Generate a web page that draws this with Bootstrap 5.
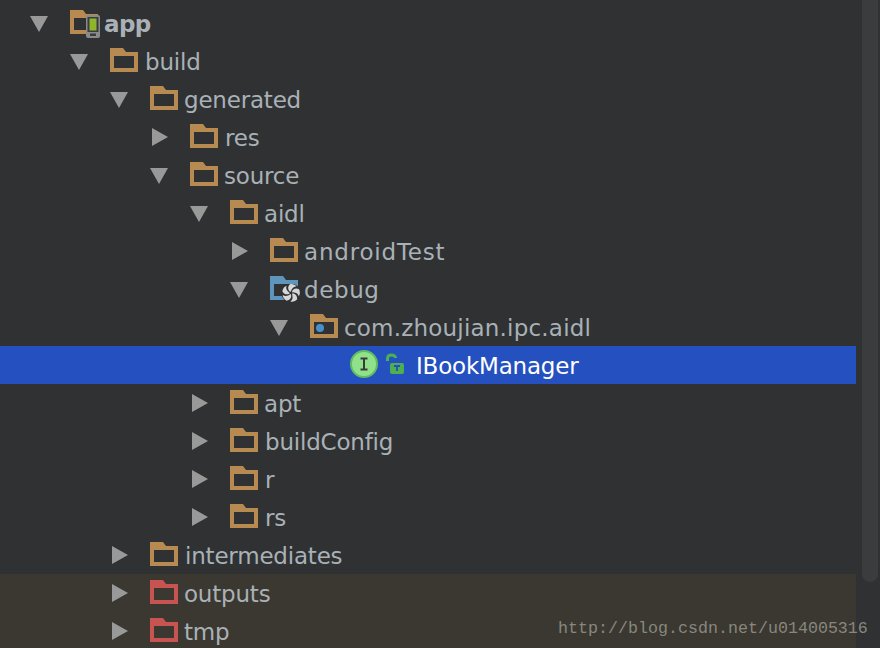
<!DOCTYPE html>
<html lang="en">
<head>
  <meta charset="UTF-8">
  <title>Project Tree</title>
  <link href="https://cdn.jsdelivr.net/npm/bootstrap@5.3.3/dist/css/bootstrap.min.css" rel="stylesheet">
  <style>
    html, body { height: 648px; overflow: hidden; }
    body { background: #2f3133; }
    .ide-pane { height: 648px; }
    .file-tree { width: 856px; padding-top: 4px; font-family: "DejaVu Sans", sans-serif; font-size: 23px; color: #a9b1b7; }
    .tree-row { height: 38px; white-space: nowrap; }
    .depth-0 { padding-left: 30px; }
    .depth-1 { padding-left: 70px; }
    .depth-2 { padding-left: 110px; }
    .depth-3 { padding-left: 150px; }
    .depth-4 { padding-left: 190px; }
    .depth-5 { padding-left: 230px; }
    .depth-6 { padding-left: 270px; }
    .depth-7 { padding-left: 310px; }
    .depth-8 { padding-left: 350px; }
    .arrow-slot { width: 18px; margin-right: 22px; flex: none; }
    .arrow-slot svg, .folder-slot svg { display: block; }
    .arrow-slot svg:not(.ms-auto) { margin-top: 2px; }
    .folder-slot { width: 34px; height: 24px; flex: none; position: relative; margin-bottom: 2px; }
    .node-label { line-height: 38px; margin-top: 2px; letter-spacing: -.2px; }
    .spread-lg { letter-spacing: .8px; }
    .spread-md { letter-spacing: .6px; }
    .spread-sm { letter-spacing: .2px; }
    .squeeze { letter-spacing: -.6px; }
    .nudge { margin-left: 1px; }
    .tree-row.selected { background: #2450c0; color: #fff; }
    .tree-row.excluded { background: #3b3831; }
    .ic-brown { color: #b68a50; }
    .ic-red { color: #c75450; }
    .ic-blue { color: #5f95bd; }
    .badge-over { position: absolute; }
    .scroll-gutter { width: 24px; padding: 0 2px 0 6px; }
    .scroll-thumb { height: 582px; background: #3a3c3e; border-radius: 0 0 8px 8px; }
    .class-slot { width: 66px; height: 38px; flex: none; }
    .watermark { position: absolute; left: 558px; top: 618px; font-family: "Liberation Mono", monospace; font-size: 16.67px; line-height: 22px; color: #87877e; white-space: nowrap; }
  </style>
</head>
<body>
<svg width="0" height="0" class="position-absolute">
  <symbol id="down" viewBox="0 0 18 16"><path d="M0 0H18L9 16Z" fill="#999"/></symbol>
  <symbol id="right" viewBox="0 0 16 18"><path d="M0 0L16 9L0 18Z" fill="#999"/></symbol>
  <symbol id="folder" viewBox="0 0 28 24"><path fill-rule="evenodd" fill="currentColor" d="M0 0H13L16 4H28V24H0ZM4 8V20H24V8Z"/></symbol>
</svg>

<div class="ide-pane d-flex position-relative">
  <div class="file-tree">
    <!-- app -->
    <div class="tree-row depth-0 d-flex align-items-center">
      <span class="arrow-slot"><svg width="18" height="16"><use href="#down"/></svg></span>
      <span class="folder-slot ic-brown">
        <svg width="28" height="24"><use href="#folder"/></svg>
        <svg class="badge-over" style="left:16px;top:5px" width="14" height="23" viewBox="0 0 14 23">
          <rect x="0" y="0" width="14" height="23" rx="2" fill="#8a8a8a"/>
          <rect x="1.5" y="2" width="11" height="15" fill="#3a3c3e"/>
          <rect x="3.5" y="3.5" width="7" height="12" fill="#8fb52a"/>
          <rect x="4" y="18.5" width="6" height="2.5" fill="#3a3c3e"/>
        </svg>
      </span>
      <span class="node-label fw-bold squeeze">app</span>
    </div>
    <div class="tree-row depth-1 d-flex align-items-center">
      <span class="arrow-slot"><svg width="18" height="16"><use href="#down"/></svg></span>
      <span class="folder-slot ic-brown"><svg width="28" height="24"><use href="#folder"/></svg></span>
      <span class="node-label nudge">build</span>
    </div>
    <div class="tree-row depth-2 d-flex align-items-center">
      <span class="arrow-slot"><svg width="18" height="16"><use href="#down"/></svg></span>
      <span class="folder-slot ic-brown"><svg width="28" height="24"><use href="#folder"/></svg></span>
      <span class="node-label">generated</span>
    </div>
    <div class="tree-row depth-3 d-flex align-items-center">
      <span class="arrow-slot"><svg width="16" height="18" class="ms-auto"><use href="#right"/></svg></span>
      <span class="folder-slot ic-brown"><svg width="28" height="24"><use href="#folder"/></svg></span>
      <span class="node-label nudge">res</span>
    </div>
    <div class="tree-row depth-3 d-flex align-items-center">
      <span class="arrow-slot"><svg width="18" height="16"><use href="#down"/></svg></span>
      <span class="folder-slot ic-brown"><svg width="28" height="24"><use href="#folder"/></svg></span>
      <span class="node-label">source</span>
    </div>
    <div class="tree-row depth-4 d-flex align-items-center">
      <span class="arrow-slot"><svg width="18" height="16"><use href="#down"/></svg></span>
      <span class="folder-slot ic-brown"><svg width="28" height="24"><use href="#folder"/></svg></span>
      <span class="node-label">aidl</span>
    </div>
    <div class="tree-row depth-5 d-flex align-items-center">
      <span class="arrow-slot"><svg width="16" height="18" class="ms-auto"><use href="#right"/></svg></span>
      <span class="folder-slot ic-brown"><svg width="28" height="24"><use href="#folder"/></svg></span>
      <span class="node-label spread-lg">androidTest</span>
    </div>
    <!-- debug, generated sources root -->
    <div class="tree-row depth-5 d-flex align-items-center">
      <span class="arrow-slot"><svg width="18" height="16"><use href="#down"/></svg></span>
      <span class="folder-slot ic-blue">
        <svg class="d-block" width="28" height="24"><use href="#folder"/></svg>
        <svg class="badge-over" style="left:11px;top:8px" width="20" height="18" viewBox="-10 -9 20 18">
          <circle r="9.500" fill="#2f3133"/>
          <g fill="#d6d6d6">
            <path id="blade" d="M-.5 -1C-3.500 -3 -3.500 -6.500 -1 -8.800C2 -9.200 4.500 -8 5.500 -6.500C2 -6.500 .8 -4 -.5 -1Z"/>
            <use href="#blade" transform="rotate(72)"/>
            <use href="#blade" transform="rotate(144)"/>
            <use href="#blade" transform="rotate(216)"/>
            <use href="#blade" transform="rotate(288)"/>
          </g>
        </svg>
      </span>
      <span class="node-label spread-md">debug</span>
    </div>
    <div class="tree-row depth-6 d-flex align-items-center">
      <span class="arrow-slot"><svg width="18" height="16"><use href="#down"/></svg></span>
      <span class="folder-slot ic-brown">
        <svg width="28" height="24"><use href="#folder"/><circle cx="10" cy="14" r="4" fill="#4a90c8"/></svg>
      </span>
      <span class="node-label spread-sm">com.zhoujian.ipc.aidl</span>
    </div>
    <div class="tree-row selected depth-8 d-flex align-items-center">
      <span class="class-slot">
        <svg width="66" height="38" viewBox="0 0 66 38">
          <circle cx="14" cy="18" r="13" fill="#90e28a" stroke="#63bb5f" stroke-width="2"/>
          <path d="M10.5 12.500H17.500M14 12.500V23.500M10.500 23.500H17.500" stroke="#3b3b3b" stroke-width="2" fill="none"/>
          <path d="M37.500 15V12.500C37.500 7.500 45.500 8 45.500 12" stroke="#4caf50" stroke-width="3" fill="none"/>
          <rect x="40" y="17" width="14" height="11" rx="2" fill="#4caf50"/>
          <path d="M44 20H50M47 20V25" stroke="#2450c0" stroke-width="1.800"/>
        </svg>
      </span>
      <span class="node-label">IBookManager</span>
    </div>
    <div class="tree-row depth-4 d-flex align-items-center">
      <span class="arrow-slot"><svg width="16" height="18" class="ms-auto"><use href="#right"/></svg></span>
      <span class="folder-slot ic-brown"><svg width="28" height="24"><use href="#folder"/></svg></span>
      <span class="node-label">apt</span>
    </div>
    <div class="tree-row depth-4 d-flex align-items-center">
      <span class="arrow-slot"><svg width="16" height="18" class="ms-auto"><use href="#right"/></svg></span>
      <span class="folder-slot ic-brown"><svg width="28" height="24"><use href="#folder"/></svg></span>
      <span class="node-label nudge">buildConfig</span>
    </div>
    <div class="tree-row depth-4 d-flex align-items-center">
      <span class="arrow-slot"><svg width="16" height="18" class="ms-auto"><use href="#right"/></svg></span>
      <span class="folder-slot ic-brown"><svg width="28" height="24"><use href="#folder"/></svg></span>
      <span class="node-label nudge">r</span>
    </div>
    <div class="tree-row depth-4 d-flex align-items-center">
      <span class="arrow-slot"><svg width="16" height="18" class="ms-auto"><use href="#right"/></svg></span>
      <span class="folder-slot ic-brown"><svg width="28" height="24"><use href="#folder"/></svg></span>
      <span class="node-label nudge">rs</span>
    </div>
    <div class="tree-row depth-2 d-flex align-items-center">
      <span class="arrow-slot"><svg width="16" height="18" class="ms-auto"><use href="#right"/></svg></span>
      <span class="folder-slot ic-brown"><svg width="28" height="24"><use href="#folder"/></svg></span>
      <span class="node-label nudge">intermediates</span>
    </div>
    <div class="tree-row excluded depth-2 d-flex align-items-center">
      <span class="arrow-slot"><svg width="16" height="18" class="ms-auto"><use href="#right"/></svg></span>
      <span class="folder-slot ic-red"><svg width="28" height="24"><use href="#folder"/></svg></span>
      <span class="node-label">outputs</span>
    </div>
    <div class="tree-row excluded depth-2 d-flex align-items-center">
      <span class="arrow-slot"><svg width="16" height="18" class="ms-auto"><use href="#right"/></svg></span>
      <span class="folder-slot ic-red"><svg width="28" height="24"><use href="#folder"/></svg></span>
      <span class="node-label">tmp</span>
    </div>
  </div>
  <div class="scroll-gutter"><div class="scroll-thumb"></div></div>
  <div class="watermark">http://blog.csdn.net/u014005316</div>
</div>
<script src="https://cdn.jsdelivr.net/npm/bootstrap@5.3.3/dist/js/bootstrap.bundle.min.js"></script>
</body>
</html>
